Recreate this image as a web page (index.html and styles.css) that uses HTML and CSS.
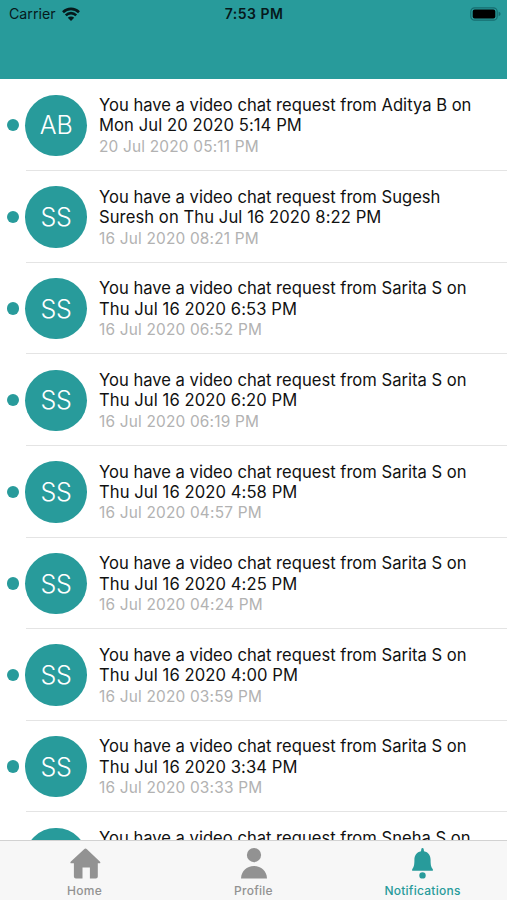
FILE: index.html
```html
<!DOCTYPE html>
<html lang="en">
<head>
    <meta charset="UTF-8">
    <meta name="viewport" content="width=device-width, initial-scale=1.0">
    <title>Notifications</title>
    <link rel="stylesheet" href="styles.css">
</head>
<body>
    <header class="header">
        <div class="status-bar">
            <div class="carrier">
                <span>Carrier</span>
                <svg class="wifi" viewBox="0 0 18 14">
                    <path d="M1 5.2a11.4 11.4 0 0 1 16 0M3.8 8.3a7.4 7.4 0 0 1 10.4 0" fill="none" stroke="#06191b" stroke-width="2.6"/>
                    <path d="M5.8 10.7a4.6 4.6 0 0 1 6.4 0L9 14z" fill="#06191b"/>
                </svg>
            </div>
            <span class="time">7:53 PM</span>
            <svg class="battery" viewBox="0 0 31 14">
                <rect x="0.8" y="0.8" width="26.4" height="12.4" rx="3.8" fill="none" stroke="#166d70" stroke-width="1.2"/>
                <rect x="2.7" y="2.6" width="22.6" height="8.8" rx="2" fill="#000"/>
                <path d="M28.6 4.8q2 .6 2 2.2t-2 2.2z" fill="#166d70"/>
            </svg>
        </div>
    </header>

    <main class="list">
        <div class="row">
            <span class="dot"></span>
            <div class="avatar">AB</div>
            <div class="content">
                <p class="message">You have a video chat request from Aditya B on<br><span class="when">Mon Jul 20 2020 5:14 PM</span></p>
                <p class="date">20 Jul 2020 05:11 PM</p>
            </div>
        </div>
        <div class="row">
            <span class="dot"></span>
            <div class="avatar">SS</div>
            <div class="content">
                <p class="message">You have a video chat request from Sugesh<br><span class="when">Suresh on Thu Jul 16 2020 8:22 PM</span></p>
                <p class="date">16 Jul 2020 08:21 PM</p>
            </div>
        </div>
        <div class="row">
            <span class="dot"></span>
            <div class="avatar">SS</div>
            <div class="content">
                <p class="message">You have a video chat request from Sarita S on<br><span class="when">Thu Jul 16 2020 6:53 PM</span></p>
                <p class="date">16 Jul 2020 06:52 PM</p>
            </div>
        </div>
        <div class="row">
            <span class="dot"></span>
            <div class="avatar">SS</div>
            <div class="content">
                <p class="message">You have a video chat request from Sarita S on<br><span class="when">Thu Jul 16 2020 6:20 PM</span></p>
                <p class="date">16 Jul 2020 06:19 PM</p>
            </div>
        </div>
        <div class="row">
            <span class="dot"></span>
            <div class="avatar">SS</div>
            <div class="content">
                <p class="message">You have a video chat request from Sarita S on<br><span class="when">Thu Jul 16 2020 4:58 PM</span></p>
                <p class="date">16 Jul 2020 04:57 PM</p>
            </div>
        </div>
        <div class="row">
            <span class="dot"></span>
            <div class="avatar">SS</div>
            <div class="content">
                <p class="message">You have a video chat request from Sarita S on<br><span class="when">Thu Jul 16 2020 4:25 PM</span></p>
                <p class="date">16 Jul 2020 04:24 PM</p>
            </div>
        </div>
        <div class="row">
            <span class="dot"></span>
            <div class="avatar">SS</div>
            <div class="content">
                <p class="message">You have a video chat request from Sarita S on<br><span class="when">Thu Jul 16 2020 4:00 PM</span></p>
                <p class="date">16 Jul 2020 03:59 PM</p>
            </div>
        </div>
        <div class="row">
            <span class="dot"></span>
            <div class="avatar">SS</div>
            <div class="content">
                <p class="message">You have a video chat request from Sarita S on<br><span class="when">Thu Jul 16 2020 3:34 PM</span></p>
                <p class="date">16 Jul 2020 03:33 PM</p>
            </div>
        </div>
        <div class="row">
            <span class="dot"></span>
            <div class="avatar"></div>
            <div class="content">
                <p class="message">You have a video chat request from Sneha S on</p>
            </div>
        </div>
    </main>

    <nav class="tab-bar">
        <a class="tab">
            <svg class="tab-icon" viewBox="0 0 32 32">
                <path d="M16.5.6q.7 0 1.4.7l12.9 12.3q.8.8.5 1.3t-1.2.4h-1.3v13.2q0 2-2 2h-5.9V19.4h-7.4v11.1H6.9q-2 0-2-2V15.3H2.6q-1 0-1.2-.4t.5-1.3L15.1 1.3q.7-.7 1.4-.7z"/>
            </svg>
            <span>Home</span>
        </a>
        <a class="tab">
            <svg class="tab-icon" viewBox="0 0 32 32">
                <circle cx="16" cy="7.1" r="7.1"/>
                <path d="M3 30.5C3.2 23.2 8.8 18.1 16 18.1s12.8 5.1 13 12.4z"/>
            </svg>
            <span>Profile</span>
        </a>
        <a class="tab active">
            <svg class="tab-icon" viewBox="0 0 32 32">
                <path d="M15.5 0q1 0 1.2 1.3l.3 2c4.4.9 6.6 4.1 6.6 8.7 0 4.7.4 6.8 1.9 8.8q.8 1 .4 1.6t-1.3.4H6.4q-1 .1-1.3-.4t.4-1.6c1.5-2 1.9-4.1 1.9-8.8 0-4.6 2.2-7.8 6.6-8.7l.3-2Q14.5 0 15.5 0z"/>
                <circle cx="15.5" cy="27.4" r="3.2"/>
            </svg>
            <span>Notifications</span>
        </a>
    </nav>
</body>
</html>
```
FILE: styles.css
```css
* {
    box-sizing: border-box;
}

body {
    margin: 0;
    height: 900px;
    display: flex;
    flex-direction: column;
    overflow: hidden;
    background-color: #fff;
    color: #111;
    font-family: Inter, "Liberation Sans", sans-serif;
}

.header {
    flex: none;
    height: 79.4px;
    background-color: #289b9b;
}

.status-bar {
    display: grid;
    grid-template-columns: 1fr auto 1fr;
    align-items: center;
    height: 27px;
    padding: 0 6px 0 9px;
    color: #06191b;
    font-size: 14.2px;
}

.carrier {
    display: flex;
    align-items: center;
    gap: 6px;
}

.wifi {
    width: 18px;
    height: 14px;
}

.time {
    margin-right: 2px;
    font-size: 14px;
    font-weight: 600;
    letter-spacing: 0.5px;
}

.battery {
    width: 31px;
    height: 14px;
    justify-self: end;
}

/* Notification list, cut off by the tab bar */
.list {
    flex: 1;
    min-height: 0;
    overflow: hidden;
}

.row {
    display: flex;
    align-items: flex-start;
    height: 91.64px;
    padding: 15.3px 0 0 7px;
    /* separator starts under the avatar */
    background: linear-gradient(#e4e4e4, #e4e4e4) 26px 100% / 100% 1px no-repeat;
}

.dot {
    flex: none;
    width: 12.4px;
    height: 12.4px;
    margin: 24.4px 6px 0 0;
    border-radius: 50%;
    background-color: #289b9b;
}

.avatar {
    flex: none;
    display: flex;
    align-items: center;
    justify-content: center;
    width: 61.4px;
    height: 61.4px;
    border-radius: 50%;
    background-color: #289b9b;
    color: #fff;
    font-size: 25px;
    font-weight: 350;
    letter-spacing: -0.2px;
}

.content {
    margin-left: 12.2px;
    padding-top: 0.4px;
    white-space: nowrap;
}

.message {
    margin: 0;
    font-size: 16.6px;
    line-height: 20.4px;
}

.when {
    letter-spacing: 0.08px;
}

.date {
    margin: 0;
    color: #b2b2b2;
    font-size: 15.4px;
    line-height: 21px;
    letter-spacing: 0.2px;
}

.tab-bar {
    flex: none;
    display: grid;
    grid-template-columns: repeat(3, 1fr);
    height: 60px;
    border-top: 1px solid #d2d2d2;
    background-color: #f7f7f7;
}

.tab {
    display: flex;
    flex-direction: column;
    align-items: center;
    padding-top: 7px;
    color: #929292;
    font-size: 12px;
    font-weight: 500;
    line-height: 15px;
    letter-spacing: 0.25px;
}

.tab.active {
    color: #289b9b;
}

.tab-icon {
    width: 32px;
    height: 32px;
    margin-bottom: 3px;
    fill: currentColor;
}
```
